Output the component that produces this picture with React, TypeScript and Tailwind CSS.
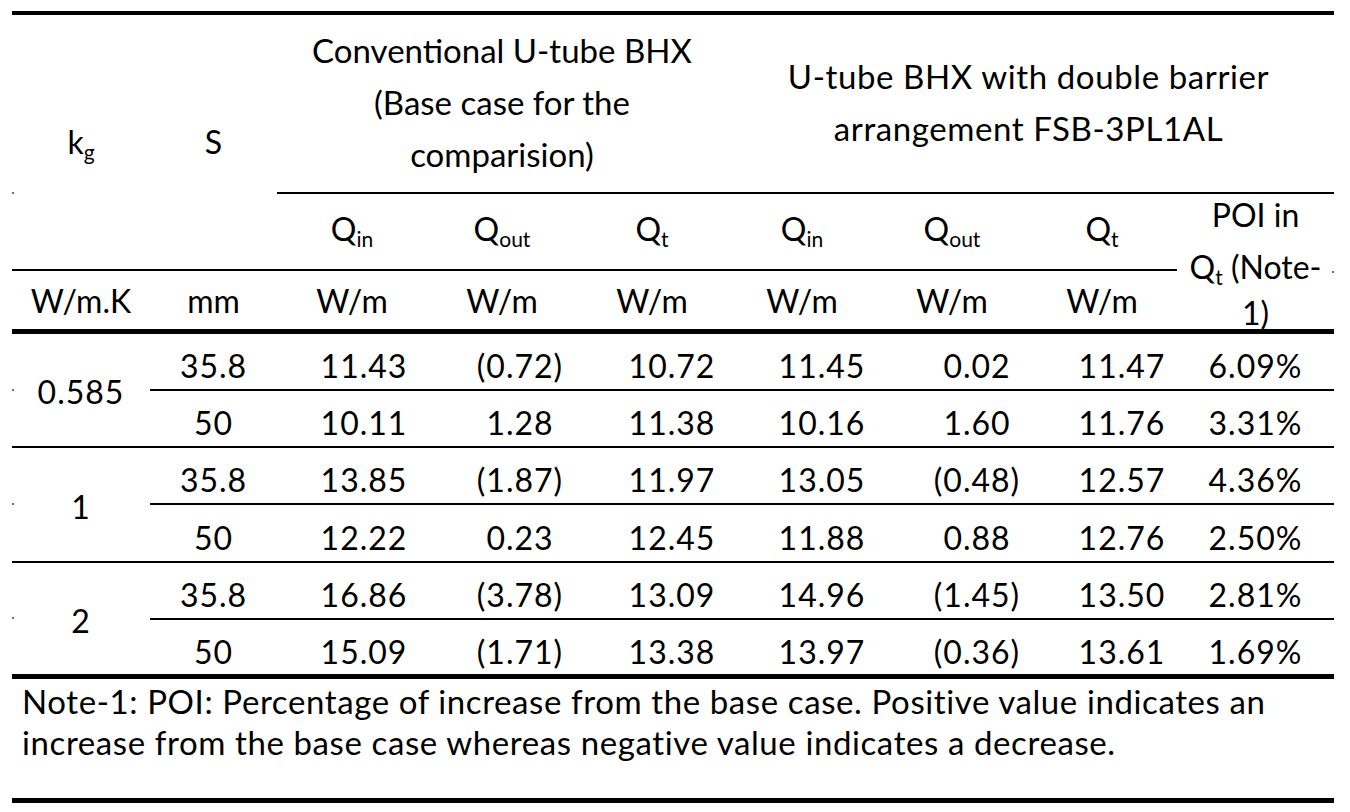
import React from "react";

type Row = { s: string; v: string[] };
const groups: { k: string; rows: Row[] }[] = [
  {
    k: "0.585",
    rows: [
      { s: "35.8", v: ["11.43", "(0.72)", "10.72", "11.45", "0.02", "11.47", "6.09%"] },
      { s: "50", v: ["10.11", "1.28", "11.38", "10.16", "1.60", "11.76", "3.31%"] },
    ],
  },
  {
    k: "1",
    rows: [
      { s: "35.8", v: ["13.85", "(1.87)", "11.97", "13.05", "(0.48)", "12.57", "4.36%"] },
      { s: "50", v: ["12.22", "0.23", "12.45", "11.88", "0.88", "12.76", "2.50%"] },
    ],
  },
  {
    k: "2",
    rows: [
      { s: "35.8", v: ["16.86", "(3.78)", "13.09", "14.96", "(1.45)", "13.50", "2.81%"] },
      { s: "50", v: ["15.09", "(1.71)", "13.38", "13.97", "(0.36)", "13.61", "1.69%"] },
    ],
  },
];

const colStart = [
  "col-start-3",
  "col-start-4",
  "col-start-5",
  "col-start-6",
  "col-start-7",
  "col-start-8",
  "col-start-9",
];
const colPad = ["pl-[24px]", "pl-[36px]", "pl-[40px]", "pl-[40px]", "pl-[50px]", "pl-[40px]", "pl-0"];
const rowStart = ["row-start-4", "row-start-5", "row-start-6", "row-start-7", "row-start-8", "row-start-9"];

function Q({ sub }: { sub: string }) {
  return (
    <span>
      Q<sub className="text-[21px] relative bottom-[-6px] align-baseline leading-none">{sub}</sub>
    </span>
  );
}

export default function App() {
  const cell = "flex items-center justify-center whitespace-nowrap";
  return (
    <div className="w-[1350px] h-[812px] bg-white text-black font-[Lato,sans-serif] text-[32px] tabular-nums relative overflow-hidden">
      <div className="ml-[12px] mt-[11px] w-[1322px] border-t-[4px] border-black grid grid-cols-[138px_127px_150px_150px_150px_150px_150px_150px_157px] grid-rows-[179px_77px_63px_57px_57px_57px_58px_57px_59px_124px]">
        {/* Header row 1 */}
        <div className={`${cell} col-start-1 row-start-1 row-span-2 border-b-2 border-black`}>
          <span>
            k<sub className="text-[21px] relative bottom-[-6px] align-baseline leading-none">g</sub>
          </span>
        </div>
        <div className={`${cell} col-start-2 row-start-1 row-span-2 border-b-2 border-black`}>S</div>
        <div className={`${cell} col-start-3 col-span-3 row-start-1 border-b-2 border-black flex-col leading-[52px] text-[33px] pb-[3px]`}>
          <div>Conventional U-tube BHX</div>
          <div>(Base case for the</div>
          <div>comparision)</div>
        </div>
        <div className={`${cell} col-start-6 col-span-4 row-start-1 border-b-2 border-black flex-col leading-[52px] text-[33px] tracking-[0.6px] pb-[3px] pr-[4px]`}>
          <div>U-tube BHX with double barrier</div>
          <div>arrangement FSB-3PL1AL</div>
        </div>

        {/* Header row 2 */}
        {["in", "out", "t", "in", "out", "t"].map((s, i) => (
          <div key={i} className={`${cell} ${colStart[i]} row-start-2 border-b-2 border-black pb-[6px]`}>
            <Q sub={s} />
          </div>
        ))}
        <div className="col-start-9 row-start-2 row-span-2 border-b-[5px] border-black overflow-hidden">
          <div className="mt-[-5px] leading-[52px] text-center whitespace-nowrap">
            <div>POI in</div>
            <div>
              <Q sub="t" /> (Note-
            </div>
            <div className="mt-[-6px]">1)</div>
          </div>
        </div>

        {/* Header row 3 (units) */}
        <div className={`${cell} col-start-1 row-start-3 border-b-[5px] border-black pt-[2px]`}>W/m.K</div>
        <div className={`${cell} col-start-2 row-start-3 border-b-[5px] border-black pt-[2px]`}>mm</div>
        {[0, 1, 2, 3, 4, 5].map((i) => (
          <div key={i} className={`${cell} ${colStart[i]} row-start-3 border-b-[5px] border-black pt-[2px]`}>
            W/m
          </div>
        ))}

        {/* Data */}
        {groups.map((g, gi) => {
          const last = gi === groups.length - 1;
          const kRow = ["row-start-4", "row-start-6", "row-start-8"][gi];
          return (
            <React.Fragment key={gi}>
              <div
                className={`${cell} col-start-1 ${kRow} row-span-2 border-black pt-[4px] tracking-[1px] ${
                  last ? "border-b-[5px]" : "border-b-2"
                }`}
              >
                {g.k}
              </div>
              {g.rows.map((r, ri) => {
                const idx = gi * 2 + ri;
                const isLast = idx === 5;
                const b = isLast ? "border-b-[5px]" : "border-b-2";
                return (
                  <React.Fragment key={ri}>
                    <div className={`${cell} col-start-2 ${rowStart[idx]} ${b} border-black pt-[9px] tracking-[1px]`}>
                      {r.s}
                    </div>
                    {r.v.map((v, ci) => (
                      <div
                        key={ci}
                        className={`${cell} ${colStart[ci]} ${rowStart[idx]} ${b} border-black pt-[9px] tracking-[1px] ${colPad[ci]}`}
                      >
                        {v}
                      </div>
                    ))}
                  </React.Fragment>
                );
              })}
            </React.Fragment>
          );
        })}

        {/* Note */}
        <div className="col-start-1 col-span-9 row-start-10 border-b-[5px] border-black pl-[10px] pt-[2px] text-[33px] tracking-[0.6px] leading-[41px] whitespace-nowrap">
          <div>Note-1: POI: Percentage of increase from the base case. Positive value indicates an</div>
          <div>increase from the base case whereas negative value indicates a decrease.</div>
        </div>
      </div>

      {/* stray dots */}
      <div className="absolute left-[12px] top-[192px] w-[2px] h-[2px] bg-gray-500" />
      <div className="absolute left-[12px] top-[389px] w-[2px] h-[2px] bg-gray-500" />
      <div className="absolute left-[12px] top-[503px] w-[2px] h-[2px] bg-gray-500" />
      <div className="absolute left-[12px] top-[617px] w-[2px] h-[2px] bg-gray-500" />
      <div className="absolute left-[1332px] top-[271px] w-[2px] h-[2px] bg-gray-500" />
    </div>
  );
}
